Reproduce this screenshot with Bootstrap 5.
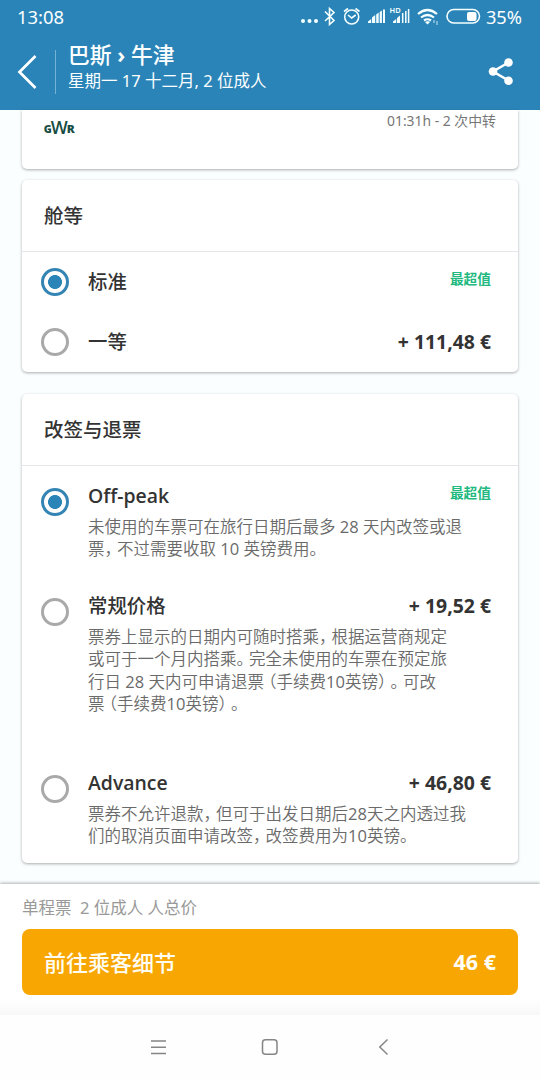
<!DOCTYPE html>
<html lang="zh-CN">
<head>
<meta charset="utf-8">
<meta name="viewport" content="width=device-width, initial-scale=1">
<title>巴斯 › 牛津</title>
<link href="https://cdn.jsdelivr.net/npm/bootstrap@5.3.0/dist/css/bootstrap.min.css" rel="stylesheet">
<style>
body{font-family:"Noto Sans","Noto Sans CJK SC",sans-serif;background:#fafeff;color:#333;height:1080px;overflow:hidden;font-size:16.5px}
.topbar{height:110px;background:#2b84b8;color:#fcffff;flex:none}
.status{height:34px;padding:0 18px 0 17px;font-size:18.4px;line-height:34px}
.status .pct{font-size:18.3px}
.tripbar{height:76px;padding-left:17px}
.trip-text{padding-bottom:11px}
.rule{width:1px;height:44px;background:#76b2d5;margin-left:18px;margin-right:12px}
.trip-title{font-size:21.8px;font-weight:500;line-height:28px;white-space:pre}
.trip-title b{font-weight:700}
.trip-sub{font-size:16.5px;line-height:24px;white-space:pre}
.panel{margin:0 22px;background:#fff;border:0;border-radius:5px;box-shadow:0 1px 3px rgba(0,0,0,.32);flex:none}
.journey{height:59px;border-radius:0 0 5px 5px;padding:0 22px}
.duration{font-size:13.9px;line-height:20px;color:#777;margin-top:1px;height:20px}
.gwr{color:#174c43;margin-top:6px;overflow:visible}
.panel-head{height:72px;border-bottom:1px solid #e5e8e9;padding:0 22px;font-size:19.5px;font-weight:500}
.choice{padding:0 27px 0 19px}
.class-row{height:60px;padding-top:10px}
.class-row .choice-title,.class-row .price{margin-top:6px}
.class-row .best{margin-top:6px}
.ring{width:28px;height:28px;border:3px solid #a9a9a9;border-radius:50%;flex:none;margin:6px 19px 0 0}
.ring.on{border-color:#3484b4;background:radial-gradient(circle,#2b84b8 6.6px,#fff 7.3px)}
.choice-title,.price{font-size:19.4px;line-height:28px;font-weight:500;white-space:nowrap}
.price{font-weight:700;font-family:"Open Sans","Noto Sans",sans-serif}
.latin{font-weight:600;font-family:"Open Sans","Noto Sans",sans-serif}
.best{font-size:13.7px;line-height:22px;font-weight:700;color:#22b980}
.terms{font-family:"Open Sans","Noto Sans CJK SC",sans-serif;font-size:16.5px;line-height:22.6px;color:#6a6a6a;margin-top:5.7px;white-space:pre;font-weight:350;text-spacing-trim:space-all}
.terms span{display:block;height:22.6px}
.terms i,.terms b{display:inline-block;width:.76em;height:22.6px;vertical-align:top;font-style:normal;font-weight:inherit}
.terms b{text-indent:-.24em}
.terms em{font-style:normal;font-weight:400}
.buy{height:131px;background:#fff;padding:0 22px;box-shadow:0 -1px 3px rgba(0,0,0,.3);flex:none}
.summary{height:45px;line-height:48px;color:#999;white-space:pre}
.go{height:66px;background:#f8a602;border-radius:8px;color:#fffef5;font-size:22px;font-weight:500;padding:0 22px;border:0}
.go strong{font-family:"Open Sans",sans-serif;font-size:21.5px}
.fade-strip{height:15px;background:linear-gradient(#fff,#f7f7f7);margin:5px -22px 0}
.sysnav{height:65px;background:#fefefe;flex:none;color:#858585}
</style>
</head>
<body class="d-flex flex-column">
<header class="topbar">
  <div class="status d-flex justify-content-between">
    <span>13:08</span>
    <span class="d-flex">
      <svg width="184" height="34" viewBox="298 0 184 34" fill="none" stroke="#f5ffff" stroke-width="1.6">
        <g fill="#f5ffff" stroke="none"><circle cx="303" cy="21" r="2"/><circle cx="309.500" cy="21" r="2"/><circle cx="316" cy="21" r="2"/>
        <path d="M368 23v-1.500l3.200-2.500v4zM372 23v-5.500l3.200-2.500v8zM376.200 23v-8.500l2.500-2v10.500zM379.700 23V12l2.200-1.500V23zM383 23V9.500h2V23zM393 23v-1.500l3.200-2.500v4zM397 23v-5l3-2.500V23z"/></g>
        <path d="M325 11.500l9 9-4.500 4V8.500l4.500 4-9 8.500"/>
        <circle cx="351.700" cy="17" r="7"/><path d="M348 15l3.700 3 4-3M344 11.500l4-3M355.500 8.500l4 3"/>
        <path d="M402.700 13v10M405.800 11v12M408.600 9v14" stroke-width="1.500"/>
        <path d="M418 14q9.500-8 19 0M421 17.500q6.500-5 13 0M424 20.500q3.500-2.500 7 0" stroke-width="2.200"/><path d="M425 22l3-1 2 1-2.500 2.500z" fill="#f5ffff" stroke="none"/><path d="M434 20v3M437 21v4" stroke="#9fd0e5" stroke-width="1.300"/>
        <rect x="447" y="9.500" width="32.500" height="13.500" rx="6.700"/><rect x="467" y="12" width="9.500" height="9" rx="2" fill="#fff" stroke="none"/>
        <text x="389.500" y="13" font-size="7.500" font-weight="600" fill="#f5ffff" stroke="none">HD</text>
      </svg>
      <span class="pct ms-1">35%</span>
    </span>
  </div>
  <div class="tripbar d-flex align-items-center">
    <svg width="20" height="34" viewBox="0 0 20 34" fill="none" stroke="#fff" stroke-width="2.700"><path d="M18.500 1L2.500 17l16 16"/></svg>
    <div class="rule"></div>
    <div class="trip-text"><div class="trip-title">巴斯 <b>›</b> 牛津</div><div class="trip-sub">星期一 17 十二月, 2 位成人</div></div>
    <svg class="ms-auto me-4" width="29" height="30" viewBox="0 1 29 30" fill="#fff"><path d="M21.500 6.500L6 15.500l15.500 9" fill="none" stroke="#fff" stroke-width="2.600"/><circle cx="21.500" cy="6.500" r="4.300"/><circle cx="6" cy="15.500" r="4.300"/><circle cx="21.500" cy="24.700" r="4.300"/></svg>
  </div>
</header>
<section class="panel journey d-flex justify-content-between align-items-start">
  <svg class="gwr" width="32" height="22" viewBox="0 0 32 22" fill="currentColor" font-family="Open Sans"><text x="-.3" y="16.500" font-size="10" font-weight="800" textLength="8" lengthAdjust="spacingAndGlyphs">G</text><text x="6.700" y="18" font-size="18.500" font-weight="600" textLength="17" lengthAdjust="spacingAndGlyphs">W</text><text x="22.700" y="16.500" font-size="10" font-weight="800" textLength="8" lengthAdjust="spacingAndGlyphs">R</text></svg>
  <span class="duration">01:31h - 2 次中转</span>
</section>
<section class="panel" style="margin-top:11px;height:192px">
  <div class="panel-head d-flex align-items-center">舱等</div>
  <div class="choice class-row d-flex align-items-start"><span class="ring on"></span><span class="choice-title">标准</span><span class="best ms-auto">最超值</span></div>
  <div class="choice class-row d-flex align-items-start"><span class="ring"></span><span class="choice-title">一等</span><span class="price ms-auto">+ 111,48 €</span></div>
</section>
<section class="panel" style="margin-top:22px;height:469px">
  <div class="panel-head d-flex align-items-center">改签与退票</div>
  <div class="choice d-flex" style="padding-top:16px;height:126px">
    <span class="ring on"></span>
    <div class="flex-grow-1"><div class="d-flex justify-content-between"><span class="choice-title latin">Off-peak</span><span class="best">最超值</span></div>
    <div class="terms"><span>未使用的车票可在旅行日期后最多 <em>28</em> 天内改签或退</span><span>票<i>，</i>不过需要收取 <em>10</em> 英镑费用。</span></div></div>
  </div>
  <div class="choice d-flex" style="height:177px">
    <span class="ring"></span>
    <div class="flex-grow-1"><div class="d-flex justify-content-between"><span class="choice-title">常规价格</span><span class="price">+ 19,52 €</span></div>
    <div class="terms"><span>票券上显示的日期内可随时搭乘<i>，</i>根据运营商规定</span><span>或可于一个月内搭乘<i>。</i>完全未使用的车票在预定旅</span><span>行日 <em>28</em> 天内可申请退票<b>（</b>手续费<em>10</em>英镑<i>）</i><i>。</i>可改</span><span>票<b>（</b>手续费<em>10</em>英镑<i>）</i>。</span></div></div>
  </div>
  <div class="choice d-flex">
    <span class="ring"></span>
    <div class="flex-grow-1"><div class="d-flex justify-content-between"><span class="choice-title latin">Advance</span><span class="price">+ 46,80 €</span></div>
    <div class="terms"><span>票券不允许退款<i>，</i>但可于出发日期后<em>28</em>天之内透过我</span><span>们的取消页面申请改签<i>，</i>改签费用为<em>10</em>英镑。</span></div></div>
  </div>
</section>
<footer class="buy mt-auto">
  <div class="summary">单程票  2 位成人 人总价</div>
  <button class="go w-100 d-flex align-items-center justify-content-between"><span>前往乘客细节</span><strong>46 €</strong></button>
  <div class="fade-strip"></div>
</footer>
<nav class="sysnav">
  <svg width="540" height="65" viewBox="0 1015 540 65" fill="none" stroke="currentColor" stroke-width="1.500"><path d="M151 1041h15M151 1047.200h15M151 1053.400h15M387.500 1039.500l-7.700 7.500 7.700 7.500"/><rect x="262.500" y="1039.700" width="14.500" height="14.500" rx="3"/></svg>
</nav>
<script src="https://cdn.jsdelivr.net/npm/bootstrap@5.3.0/dist/js/bootstrap.bundle.min.js"></script>
</body>
</html>
